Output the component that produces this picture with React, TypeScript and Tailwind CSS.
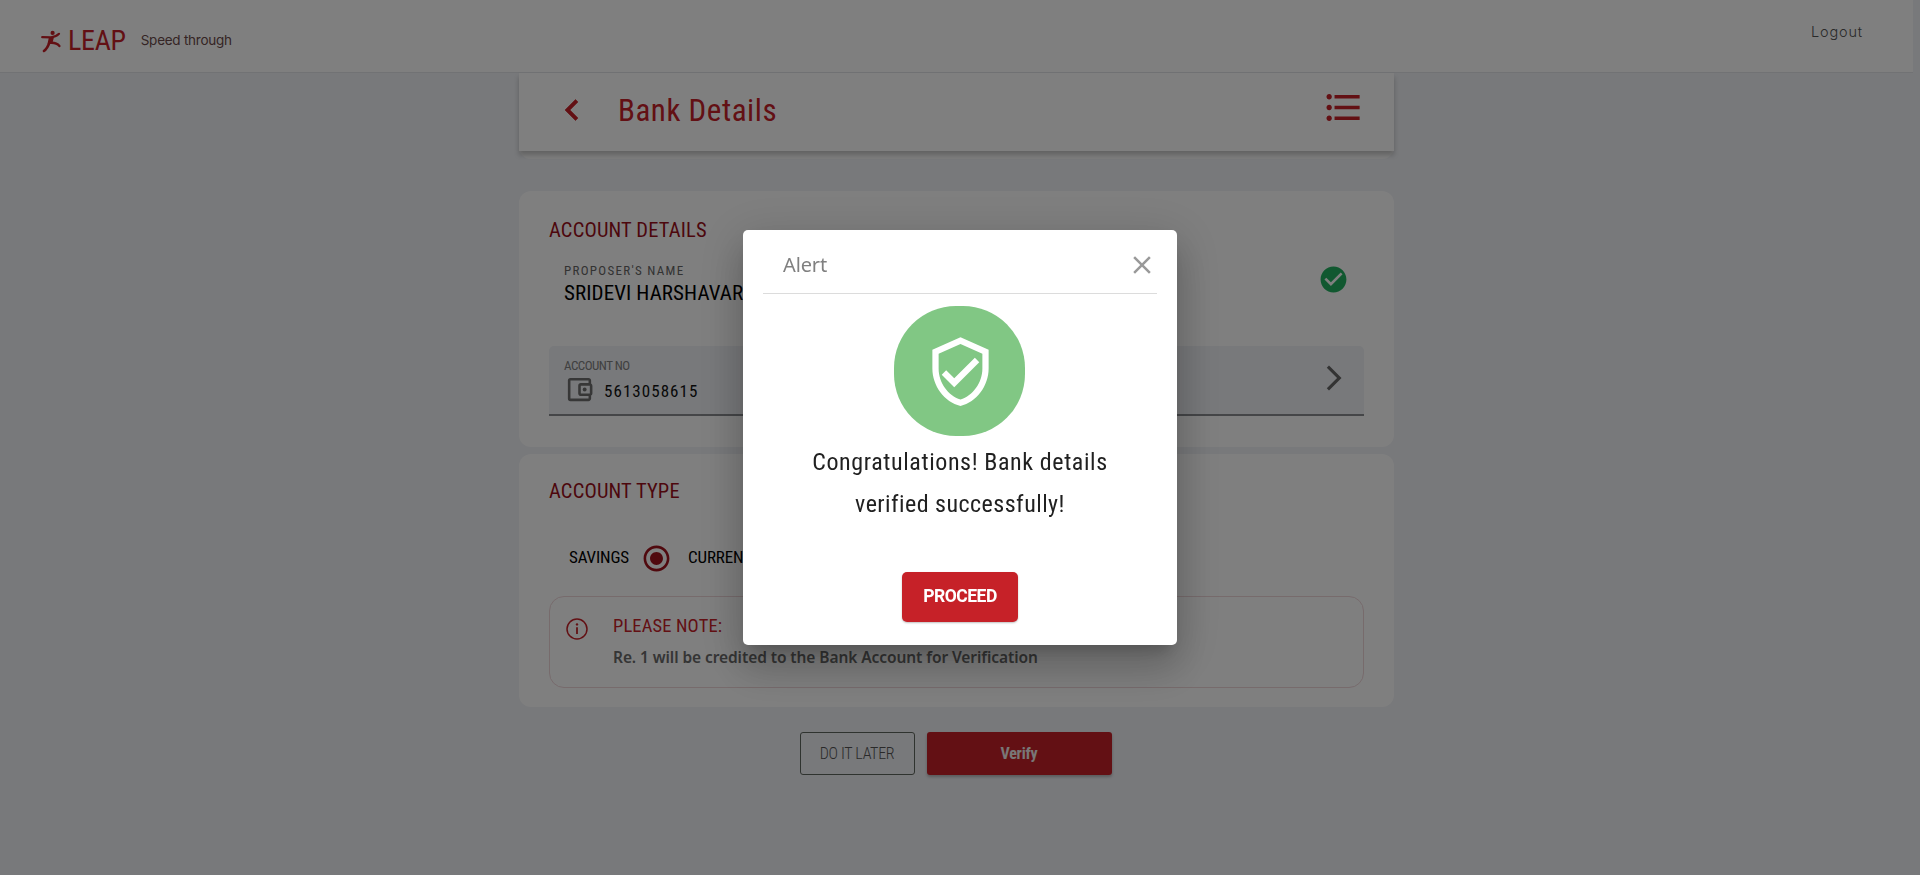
import type { ReactNode } from "react";
import {
  MdArrowForwardIos,
  MdCheckCircle,
  MdClose,
  MdFormatListBulleted,
  MdOutlineAccountBalanceWallet,
  MdOutlineVerifiedUser,
  MdRadioButtonChecked,
} from "react-icons/md";

const DIN = "font-['Roboto',sans-serif] [font-stretch:75%] whitespace-nowrap";
const DIN_WIDE = "font-['Roboto',sans-serif] [font-stretch:84%] whitespace-nowrap";

function RunnerLogo() {
  return (
    <svg width="20" height="23" viewBox="0 0 20 23" className="shrink-0" fill="none" stroke="#c62128" strokeLinecap="round" strokeLinejoin="round">
      <circle cx="11.6" cy="2.9" r="2.1" fill="#c62128" stroke="none" />
      <path d="M1.2 7.2 L10 7.3 Q14.5 7.2 18 3.8" strokeWidth="2.2" />
      <path d="M8.6 7.8 L12 7.8 L10.6 13 L7.4 13.4 Z" fill="#c62128" strokeWidth="1.6" />
      <path d="M8.6 12 Q6.5 18.5 2.9 21" strokeWidth="2.5" />
      <path d="M9.5 12.8 Q15.5 12.4 18.4 16" strokeWidth="2.3" />
    </svg>
  );
}

function BackIcon() {
  return (
    <svg width="42" height="42" viewBox="0 0 24 24" className="mt-[16px] shrink-0" fill="#c62128" stroke="#c62128" strokeWidth="0.35">
      <path d="M15.41 7.41 14 6l-6 6 6 6 1.41-1.41L10.83 12z" />
    </svg>
  );
}

function InfoIcon() {
  return (
    <svg width="22" height="22" viewBox="0 0 22 22" fill="none" stroke="#c62128" className="shrink-0">
      <circle cx="11" cy="11" r="10" strokeWidth="1.5" />
      <path d="M11 9.2 V16" strokeWidth="1.8" />
      <circle cx="11" cy="6.4" r="1.2" fill="#c62128" stroke="none" />
    </svg>
  );
}

function SectionTitle({ children }: { children: ReactNode }) {
  return <h2 className={`${DIN} text-[20.5px] leading-6 tracking-[0.15px] text-[#9a0f1a]`}>{children}</h2>;
}

function TopBar() {
  return (
    <header className="flex h-[73px] w-[1913px] items-start border-b border-[#e2e4e8] bg-white pl-[41px]">
      <div className="flex h-[73px] items-start pt-[30px]">
        <RunnerLogo />
      </div>
      <span className={`${DIN} ml-[7px] mt-[25px] text-[28px] leading-8 tracking-[-0.3px] text-[#c62128]`}>LEAP</span>
      <span className="ml-[15px] mt-[30px] whitespace-nowrap font-['Inter',sans-serif] text-[13.5px] leading-5 tracking-[-0.25px] text-[#6b4a4a]">
        Speed through
      </span>
      <span className="ml-auto mr-[50px] mt-[22px] whitespace-nowrap font-['Inter',sans-serif] text-[14.5px] font-light leading-5 tracking-[0.85px] text-[#555]">
        Logout
      </span>
    </header>
  );
}

function PageTitle() {
  return (
    <div className="h-[86px] rounded-b-xl bg-[#fcfcfc]">
      <div className="flex h-[78px] items-start justify-between bg-white pl-[32px] pr-[29px] shadow-[0_4px_5px_rgba(0,0,0,0.22)]">
        <div className="flex items-start">
          <BackIcon />
          <h1 className={`${DIN_WIDE} ml-[25px] mt-[18px] text-[31px] font-[370] leading-10 tracking-[0.55px] text-[#c62128]`}>Bank Details</h1>
        </div>
        <MdFormatListBulleted className="mt-[13px] size-[43px] text-[#c62128]" />
      </div>
    </div>
  );
}

function AccountDetails() {
  return (
    <section className="mt-[32px] h-[256px] rounded-xl bg-white px-[30px] pt-[27px]">
      <SectionTitle>ACCOUNT DETAILS</SectionTitle>
      <div className="mt-[19px] flex h-[60px] items-start justify-between px-[15px]">
        <div className="flex flex-col">
          <span className={`${DIN} text-[13px] leading-5 tracking-[1.3px] text-[#666]`}>PROPOSER'S NAME</span>
          <span className={`${DIN} text-[21px] leading-6 tracking-[0.1px] text-black`}>SRIDEVI HARSHAVAR</span>
        </div>
        <MdCheckCircle className="mt-[3px] size-[31px] text-[#23b161]" />
      </div>
      <div className="mt-[25px] flex h-[70px] items-start justify-between rounded-t-[5px] border-b-2 border-[#8a8c90] bg-[#f0f2f6] px-[15px]">
        <div className="flex flex-col">
          <span className={`${DIN} mt-[10px] text-[13px] leading-5 tracking-[-0.5px] text-[#808080]`}>ACCOUNT NO</span>
          <div className="-mt-[2px] flex items-center">
            <MdOutlineAccountBalanceWallet className="size-[31px] text-[#6e6e6e]" />
            <span className={`${DIN} ml-[9px] mt-[3px] text-[17px] leading-6 tracking-[1.05px] text-[#111]`}>5613058615</span>
          </div>
        </div>
        <MdArrowForwardIos className="mt-[17px] size-[30px] text-[#666]" />
      </div>
    </section>
  );
}

function AccountType() {
  return (
    <section className="mt-[7px] h-[253px] rounded-xl bg-white px-[30px] pt-[25px]">
      <SectionTitle>ACCOUNT TYPE</SectionTitle>
      <div className="mt-[39px] flex h-[32px] items-center pl-[20px]">
        <span className={`${DIN} text-[17px] tracking-[-0.15px] text-black`}>SAVINGS</span>
        <MdRadioButtonChecked className="ml-[12px] size-[31px] text-[#a0121c]" />
        <span className={`${DIN} ml-[16px] text-[17px] tracking-[-0.15px] text-black`}>CURRENT</span>
      </div>
      <div className="mt-[22px] flex h-[92px] items-start rounded-[15px] border border-[#eed6d9] pl-[16px]">
        <div className="pt-[21px]">
          <InfoIcon />
        </div>
        <div className="ml-[25px] flex flex-col pt-[17px]">
          <span className={`${DIN} text-[18.5px] leading-6 tracking-[0.15px] text-[#c62128]`}>PLEASE NOTE:</span>
          <span className="mt-[7px] whitespace-nowrap font-['Noto_Sans',sans-serif] text-[15.5px] font-semibold leading-6 tracking-[-0.08px] text-[#6a6a6a]">
            Re. 1 will be credited to the Bank Account for Verification
          </span>
        </div>
      </div>
    </section>
  );
}

function Actions() {
  return (
    <div className="mt-[25px] flex justify-center gap-3 pr-[2px]">
      <button className={`${DIN} h-[43px] w-[115px] rounded-[3px] border border-[#5f665f] text-[16px] font-light tracking-[-0.3px] text-[#555]`}>
        DO IT LATER
      </button>
      <button className={`${DIN} h-[43px] w-[185px] rounded-[3px] bg-[#c62128] text-[16px] font-bold tracking-[-0.2px] text-[#f2eeee] shadow-[0_2px_3px_rgba(0,0,0,0.25)]`}>
        Verify
      </button>
    </div>
  );
}

function AlertDialog() {
  return (
    <div className="fixed inset-0 flex items-center justify-center bg-black/50">
      <div
        role="dialog"
        className="flex h-[415px] w-[434px] flex-col items-center rounded-[5px] bg-white px-5 shadow-[0_11px_15px_-7px_rgba(0,0,0,0.2),0_24px_38px_3px_rgba(0,0,0,0.14),0_9px_46px_8px_rgba(0,0,0,0.12)]"
      >
        <div className="flex h-[64px] w-full items-start justify-between border-b border-[#dcdcdc] pl-5">
          <span className="mt-[21px] whitespace-nowrap font-['Noto_Sans',sans-serif] text-[20px] leading-7 tracking-[-0.15px] text-[#808080] [font-stretch:87.5%]">
            Alert
          </span>
          <MdClose className="mt-[20px] size-[30px] text-[#999]" />
        </div>
        <div className="mr-px mt-[12px] flex h-[130px] w-[131px] items-center justify-center rounded-[62px] bg-[#81c784]">
          <MdOutlineVerifiedUser className="ml-px size-[75px] text-white" />
        </div>
        <p className={`${DIN_WIDE} mt-[5px] text-center text-[24px] font-[370] leading-[42px] tracking-[0.6px] text-[#212121]`}>
          Congratulations! Bank details
          <br />
          <span className="tracking-[0.45px]">verified successfully!</span>
        </p>
        <button className="mt-[47px] h-[50px] w-[116px] shrink-0 rounded-[5px] bg-[#c62128] pb-px font-['Roboto',sans-serif] text-[17.5px] font-bold tracking-[-0.5px] text-white shadow-[0_1px_2px_rgba(0,0,0,0.25)]">
          PROCEED
        </button>
      </div>
    </div>
  );
}

export default function App() {
  return (
    <div className="h-[875px] w-full overflow-hidden bg-[#f0f2f6]">
      <TopBar />
      <main className="ml-[519px] w-[875px]">
        <PageTitle />
        <AccountDetails />
        <AccountType />
        <Actions />
      </main>
      <AlertDialog />
    </div>
  );
}
